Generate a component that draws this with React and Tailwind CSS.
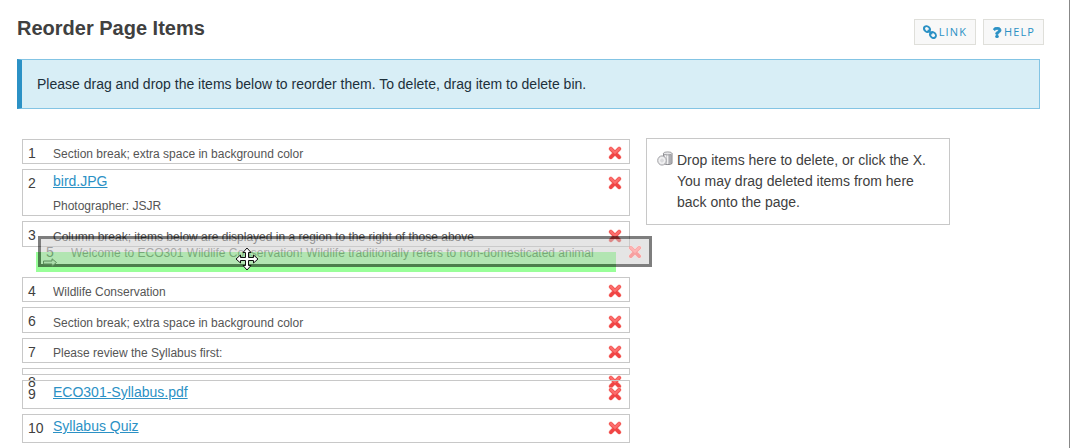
import React from "react";
import { FaQuestion } from "react-icons/fa";

const items = [
  { n: 1, text: "Section break; extra space in background color" },
  { n: 2, link: "bird.JPG", text: "Photographer: JSJR" },
  { n: 3, tall: true, text: "Column break; items below are displayed in a region to the right of those above" },
  { placeholder: true },
  { n: 4, text: "Wildlife Conservation" },
  { n: 6, tall: true, text: "Section break; extra space in background color" },
  { n: 7, text: "Please review the Syllabus first:" },
  { n: 8, empty: true },
  { n: 9, link: "ECO301-Syllabus.pdf" },
  { n: 10, link: "Syllabus Quiz" },
];

function CrossIcon() {
  return (
    <svg viewBox="0 0 16 16" className="block h-4 w-4" aria-hidden="true">
      <path d="M3.800 3.800l8.400 8.400M12.200 3.800l-8.400 8.400" fill="none" stroke="#fbc4bf" strokeWidth="4.600" strokeLinecap="round" />
      <path d="M3.800 3.800l8.400 8.400M12.200 3.800l-8.400 8.400" fill="none" stroke="#f04444" strokeWidth="3.600" strokeLinecap="round" />
      <path d="M3.800 3.600L8 7.800l4.200-4.200" fill="none" stroke="#fc6e6c" strokeWidth="2.200" strokeLinecap="round" />
    </svg>
  );
}

function ChainIcon() {
  return (
    <svg viewBox="0 0 14 14" className="block h-3.5 w-3.5" fill="none" stroke="currentColor" aria-hidden="true">
      <ellipse cx="4" cy="4" rx="3.200" ry="2.600" strokeWidth="1.900" transform="rotate(45 4 4)" />
      <ellipse cx="10" cy="10" rx="3.200" ry="2.600" strokeWidth="1.900" transform="rotate(45 10 10)" />
      <path d="M5.400 5.400l3.200 3.200" strokeWidth="1.900" strokeLinecap="round" />
    </svg>
  );
}

function BinIcon() {
  return (
    <svg viewBox="0 0 16 16" className="mt-px block h-4 w-4 shrink-0" aria-hidden="true">
      <path d="M6.500 2.500v10c1.500 1.400 7 1.400 8.500 0v-10z" fill="#c4c4c8" stroke="#85858a" />
      <path d="M8.500 4v8.500M10.500 4v9" stroke="#f2f2f2" strokeWidth="1.200" />
      <path d="M13 4v8.500" stroke="#98989c" />
      <ellipse cx="10.700" cy="2.400" rx="4.300" ry="1.500" fill="#e6e6e8" stroke="#8a8a8e" strokeWidth=".8" />
      <ellipse cx="5" cy="9.500" rx="4.300" ry="4.600" fill="#e9e9eb" stroke="#a2a2a6" />
      <ellipse cx="5" cy="9.500" rx="2.400" ry="2.700" fill="#dadadd" stroke="#f8f8f8" />
    </svg>
  );
}

function ArrowIcon() {
  return (
    <svg viewBox="0 0 14 9" className="block h-[9px] w-[14px]" aria-hidden="true">
      <path d="M.5 3h8.500V.8l4.500 3.700L9 8.200V6H.5z" fill="#bbb" stroke="#222" />
    </svg>
  );
}

function MoveCursor() {
  return (
    <svg viewBox="0 0 24 24" className="block h-6 w-6" aria-hidden="true">
      <path
        d="M12 1l4 4.500h-2.500v5h5V8L23 12l-4.500 4v-2.500h-5v5H16L12 23l-4-4.500h2.500v-5h-5V16L1 12l4.500-4v2.500h5v-5H8z"
        fill="#fff"
        stroke="#111"
        strokeLinejoin="round"
      />
    </svg>
  );
}

function RowContent({ item }) {
  const textClass = item.link
    ? "mt-1 leading-[21px]"
    : item.tall
      ? "truncate pt-[5px] leading-[20px]"
      : "truncate pt-1 leading-[20px]";
  return (
    <>
      <span className="w-[30px] shrink-0 pt-0.5 pl-[5px] text-sm leading-[22px]">{item.n}</span>
      <div className="min-w-0 flex-1 text-xs text-[#555]">
        {item.link && (
          <a href="#item" className="block w-fit text-sm leading-[22px] text-[#2b91c5] underline">
            {item.link}
          </a>
        )}
        {item.text && <p className={textClass}>{item.text}</p>}
      </div>
      <button
        type="button"
        aria-label={`Delete item ${item.n}`}
        className={`mr-1.5 h-4 w-4 shrink-0 ${item.tall ? "mt-1.5" : "mt-[5px]"}`}
      >
        <CrossIcon />
      </button>
    </>
  );
}

function rowHeight(item) {
  if (item.empty) return "h-[7px]";
  if (item.link) return item.text ? "h-[47px]" : "h-[29px]";
  return item.tall ? "h-[26px]" : "h-[25px]";
}

function Row({ item }) {
  if (item.placeholder) {
    return <li className="mx-3.5 h-5 bg-[#99ff99]" />;
  }
  return (
    <li className={`flex items-start border border-[#c8c8c8] ${rowHeight(item)}`}>
      <RowContent item={item} />
    </li>
  );
}

function ToolLink({ icon, label }) {
  return (
    <a
      href="#tool"
      className="flex h-[26px] items-center gap-0.5 border border-[#dfdfda] bg-[#f8f8f8] px-2 font-['Open_Sans',sans-serif] text-[11px] tracking-widest text-[#2b91c5]"
    >
      {icon}
      {label}
    </a>
  );
}

export default function App() {
  return (
    <main className="mr-px min-h-screen border-r border-[#888] bg-white pr-[25px] pl-[17px] font-['Liberation_Sans',Arial,sans-serif] text-[#404040]">
      <header className="flex items-start justify-between pt-[15px]">
        <h1 className="text-xl leading-[26px] font-bold">Reorder Page Items</h1>
        <nav className="flex gap-[7px] pt-1">
          <ToolLink icon={<ChainIcon />} label="LINK" />
          <ToolLink icon={<FaQuestion className="h-[11px] w-2.5" stroke="currentColor" strokeWidth="40" />} label="HELP" />
        </nav>
      </header>
      <div className="mt-3.5 mr-1 border border-l-[5px] border-[#83c4e4] border-l-[#2b91c5] bg-[#d8eef6] px-[15px] py-3 text-sm leading-6 text-[#1d303b]">
        Please drag and drop the items below to reorder them. To delete, drag item to delete bin.
      </div>
      <div className="mt-[29px] mr-1 grid grid-cols-[2fr_1fr] items-start gap-4 pr-[90px] pb-[5px] pl-[5px]">
        <div className="relative pt-px">
          <ol className="flex flex-col gap-[5px]">
            {items.map((item, i) => (
              <Row key={i} item={item} />
            ))}
          </ol>
          <div className="absolute top-[98px] left-4 flex h-[31px] w-[calc(100%+6px)] cursor-move items-start border-[3px] border-black bg-[#ccc] opacity-50">
            <RowContent
              item={{
                n: 5,
                text: "Welcome to ECO301 Wildlife Conservation! Wildlife traditionally refers to non-domesticated animal",
              }}
            />
            <span className="absolute top-[19px] left-0.5">
              <ArrowIcon />
            </span>
          </div>
          <span className="absolute top-[109px] left-[213px]">
            <MoveCursor />
          </span>
        </div>
        <aside className="flex gap-1 border border-[#c8c8c8] px-2.5 py-[11px]">
          <BinIcon />
          <p className="text-sm leading-[21px]">
            Drop items here to delete, or click the X. You may drag deleted items from here back onto the page.
          </p>
        </aside>
      </div>
    </main>
  );
}
